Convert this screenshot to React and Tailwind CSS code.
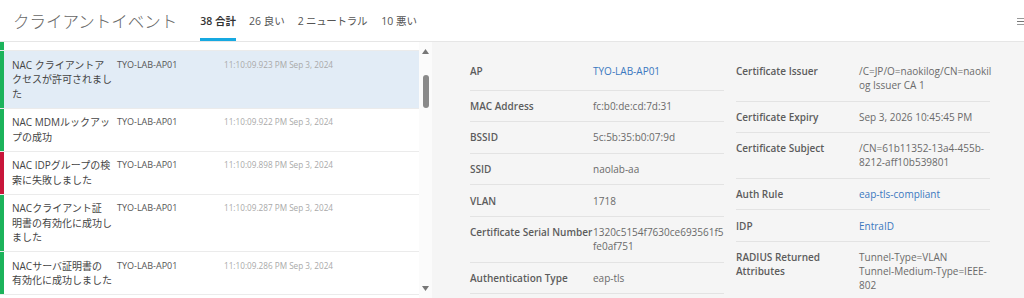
import React from "react";

const FONT = { fontFamily: '"Open Sans", "Noto Sans CJK JP", sans-serif' };

const events = [
  { color: "bg-[#1cb35b]", lines: ["NAC クライアントア", "クセスが許可されまし", "た"], ts: "11:10:09.923 PM Sep 3, 2024", selected: true },
  { color: "bg-[#1cb35b]", lines: ["NAC MDMルックアッ", "プの成功"], ts: "11:10:09.922 PM Sep 3, 2024" },
  { color: "bg-[#c8163a]", lines: ["NAC IDPグループの検", "索に失敗しました"], ts: "11:10:09.898 PM Sep 3, 2024" },
  { color: "bg-[#1cb35b]", lines: ["NACクライアント証", "明書の有効化に成功し", "ました"], ts: "11:10:09.287 PM Sep 3, 2024" },
  { color: "bg-[#1cb35b]", lines: ["NACサーバ証明書の", "有効化に成功しました"], ts: "11:10:09.286 PM Sep 3, 2024" },
];

const leftRows = [
  { label: "AP", value: ["TYO-LAB-AP01"], link: true, first: true },
  { label: "MAC Address", value: ["fc:b0:de:cd:7d:31"] },
  { label: "BSSID", value: ["5c:5b:35:b0:07:9d"] },
  { label: "SSID", value: ["naolab-aa"] },
  { label: "VLAN", value: ["1718"] },
  { label: "Certificate Serial Number", value: ["1320c5154f7630ce693561f5", "fe0af751"] },
  { label: "Authentication Type", value: ["eap-tls"] },
];

const rightRows = [
  { label: ["Certificate Issuer"], value: ["/C=JP/O=naokilog/CN=naokil", "og Issuer CA 1"] },
  { label: ["Certificate Expiry"], value: ["Sep 3, 2026 10:45:45 PM"] },
  { label: ["Certificate Subject"], value: ["/CN=61b11352-13a4-455b-", "8212-aff10b539801"] },
  { label: ["Auth Rule"], value: ["eap-tls-compliant"], link: true },
  { label: ["IDP"], value: ["EntraID"], link: true },
  { label: ["RADIUS Returned", "Attributes"], value: ["Tunnel-Type=VLAN", "Tunnel-Medium-Type=IEEE-", "802"] },
];

function DetailRow({ label, value, link, first }) {
  const labels = Array.isArray(label) ? label : [label];
  return (
    <div className={`flex border-b border-[#e3e3e3] leading-[14px] ${first ? "pt-[8.3px] pb-[11.3px]" : "py-[8.3px]"}`}>
      <div className="w-[123px] shrink-0 text-[10px] font-semibold text-[#5c5c5c]">
        {labels.map((l, i) => (
          <div key={i} className="whitespace-nowrap">{l}</div>
        ))}
      </div>
      <div className={`flex-1 text-[10px] ${link ? "text-[#3b78bf]" : "text-[#6a6a6a]"}`}>
        {value.map((v, i) => (
          <div key={i} className="whitespace-nowrap">{v}</div>
        ))}
      </div>
    </div>
  );
}

export default function App() {
  return (
    <div style={FONT} className="w-[1024px] h-[298px] overflow-hidden bg-white flex flex-col">
      {/* Header */}
      <div className="h-[42px] shrink-0 flex items-stretch border-b border-[#e6e6e6] pl-[13px] overflow-hidden">
        <div className="flex items-center pt-[4px] text-[16.5px] text-[#666] font-light whitespace-nowrap">クライアントイベント</div>
        <div className="flex items-stretch ml-[23px] text-[10.5px] whitespace-nowrap">
          <div className="flex items-center pt-[6px] border-b-[3px] border-[#17a9e1] font-semibold text-[#333]">38 合計</div>
          <div className="flex items-center pt-[6px] border-b-[3px] border-transparent ml-[13px] text-[#555]">26 良い</div>
          <div className="flex items-center pt-[6px] border-b-[3px] border-transparent ml-[13px] text-[#555] tracking-[-0.3px]">2 ニュートラル</div>
          <div className="flex items-center pt-[6px] border-b-[3px] border-transparent ml-[14px] text-[#555]">10 悪い</div>
        </div>
        <div className="ml-auto flex items-center -mr-[3px] pt-[2px]">
          <div className="flex flex-col gap-[2px] w-[10px]">
            <div className="h-[1px] bg-[#999]" />
            <div className="h-[1px] bg-[#777]" />
            <div className="h-[1px] bg-[#999]" />
          </div>
        </div>
      </div>

      {/* Body */}
      <div className="flex flex-1 min-h-0">
        {/* List */}
        <div className="w-[419px] shrink-0 flex flex-col overflow-hidden">
          <div className="flex h-[9px] shrink-0 border-b border-[#ebebeb]">
            <div className="w-[4px] bg-[#1cb35b]" />
          </div>
          {events.map((e, i) => (
            <div key={i} className={`flex shrink-0 border-b border-[#ebebeb] ${e.selected ? "bg-[#e2ecf6]" : "bg-white"}`}>
              <div className={`w-[4px] shrink-0 ${e.color}`} />
              <div className="flex pl-[8px] py-[6.5px] leading-[14.5px]">
                <div className="w-[105px] shrink-0 text-[10px] text-[#444]">
                  {e.lines.map((l, j) => (
                    <div key={j} className="whitespace-nowrap">{l}</div>
                  ))}
                </div>
                <div className="w-[107px] shrink-0 text-[9px] text-[#555] whitespace-nowrap">TYO-LAB-AP01</div>
                <div className="text-[8.2px] text-[#a9a9a9] whitespace-nowrap">{e.ts}</div>
              </div>
            </div>
          ))}
        </div>

        {/* Scrollbar */}
        <div className="w-[13px] shrink-0 bg-[#fbfbfb] flex flex-col items-center pt-[7px] pb-[7px]">
          <svg width="7" height="5" viewBox="0 0 7 5"><path d="M3.5 0 L7 5 L0 5 Z" fill="#777" /></svg>
          <div className="mt-[21px] w-[6px] h-[33px] rounded-full bg-[#8a8a8a]" />
          <div className="flex-1" />
          <svg width="7" height="5" viewBox="0 0 7 5"><path d="M0 0 L7 0 L3.5 5 Z" fill="#777" /></svg>
        </div>

        {/* Details */}
        <div className="flex-1 bg-[#f5f5f5] flex gap-[12px] pl-[38px] pt-[14px]">
          <div className="w-[254px] shrink-0 flex flex-col">
            {leftRows.map((r, i) => (
              <DetailRow key={i} {...r} />
            ))}
          </div>
          <div className="w-[254px] shrink-0 flex flex-col">
            {rightRows.map((r, i) => (
              <DetailRow key={i} {...r} />
            ))}
          </div>
        </div>
      </div>
    </div>
  );
}
